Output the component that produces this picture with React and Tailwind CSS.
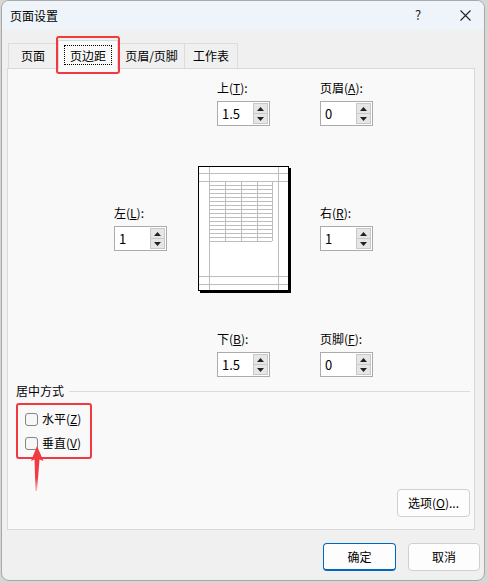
import { useState } from "react";

const font = "font-['Noto_Sans_CJK_SC','Microsoft_YaHei',sans-serif]";

function Spinner({ label, mnemonic, suffix = "):", value }) {
  return (
    <div className="flex flex-col w-[53px]">
      <div className="h-[16px] leading-[16px] text-[12px] text-black whitespace-nowrap mb-[5px]">
        {label}(<span className="underline">{mnemonic}</span>{suffix}
      </div>
      <div className="flex h-[25px] w-[53px] border border-[#ababab] bg-white">
        <div className="flex-1 flex items-center pl-[4px] text-[13px] text-black leading-none">
          {value}
        </div>
        <div className="flex flex-col w-[16px] py-px pr-px gap-0">
          <div className="flex-1 flex items-center justify-center bg-[#e6e6e6] border border-[#c8c8c8]">
            <svg width="7" height="4" viewBox="0 0 7 4">
              <path d="M3.5 0 L7 4 L0 4 Z" fill="#222" />
            </svg>
          </div>
          <div className="flex-1 flex items-center justify-center bg-[#e6e6e6] border border-[#c8c8c8] border-t-0">
            <svg width="7" height="4" viewBox="0 0 7 4">
              <path d="M0 0 L7 0 L3.5 4 Z" fill="#222" />
            </svg>
          </div>
        </div>
      </div>
    </div>
  );
}

function PagePreview() {
  const rows = [];
  for (let i = 0; i <= 15; i++) rows.push(15 + i * 4);
  return (
    <svg width="93" height="127" viewBox="0 0 93 127">
      <rect x="2" y="2" width="91" height="125" fill="#000" />
      <rect x="0.5" y="0.5" width="90" height="124" fill="#fff" stroke="#000" />
      <g stroke="#bdbdbd" strokeWidth="1" shapeRendering="crispEdges">
        <line x1="11.5" y1="1" x2="11.5" y2="124" />
        <line x1="80.5" y1="1" x2="80.5" y2="124" />
        <line x1="1" y1="7.5" x2="90" y2="7.5" />
        <line x1="1" y1="15.5" x2="90" y2="15.5" />
        <line x1="1" y1="110.5" x2="90" y2="110.5" />
        <line x1="1" y1="118.5" x2="90" y2="118.5" />
        {rows.map((y) => (
          <line key={y} x1="11" y1={y + 0.5} x2="74" y2={y + 0.5} />
        ))}
        {[27, 43, 59, 74].map((x) => (
          <line key={x} x1={x + 0.5} y1="15" x2={x + 0.5} y2="75" />
        ))}
      </g>
    </svg>
  );
}

function Checkbox({ label, mnemonic }) {
  const [checked, setChecked] = useState(false);
  return (
    <label className="h-[24px] flex items-center cursor-default">
      <span
        onClick={() => setChecked(!checked)}
        className="w-[13px] h-[13px] rounded-[3px] border border-[#858585] bg-[#f7f7f7] flex items-center justify-center"
      >
        {checked && <span className="text-[9px] leading-none">✓</span>}
      </span>
      <span className="ml-[4px] text-[12px] leading-[16px] text-black whitespace-nowrap">
        {label}(<span className="underline">{mnemonic}</span>)
      </span>
    </label>
  );
}

function Button({ children, primary, className = "" }) {
  return (
    <button
      className={
        "h-[28px] rounded-[4px] bg-[#fdfdfd] text-[12px] text-black " +
        (primary
          ? "border border-[#0067c0] border-b-2 "
          : "border border-[#d0d0d0] ") +
        className
      }
    >
      {children}
    </button>
  );
}

export default function App() {
  const tabs = ["页面", "页边距", "页眉/页脚", "工作表"];
  const widths = ["w-[50px]", "w-[60px]", "w-[67px]", "w-[53px]"];

  return (
    <div className={"w-[488px] h-[583px] bg-[#d6d6d6] pl-px relative " + font}>
      <div className="w-[484px] h-[581px] rounded-[8px] border border-[#a8a8a8] bg-[#f0f0f0] overflow-hidden flex flex-col">
        {/* title bar */}
        <div className="h-[29px] shrink-0 bg-[#eef4f9] flex items-center relative">
          <span className="ml-[8px] text-[12px] text-black leading-none">页面设置</span>
          <span className="absolute left-[413px] top-[6px] text-[13px] leading-[16px] text-[#222]">?</span>
          <svg className="absolute left-[458px] top-[9px]" width="11" height="11" viewBox="0 0 11 11">
            <path d="M0.5 0.5 L10.5 10.5 M10.5 0.5 L0.5 10.5" stroke="#222" strokeWidth="1.1" />
          </svg>
        </div>

        {/* tabs */}
        <div className="mt-[10px] ml-[6px] flex items-end h-[28px] relative z-10">
          {tabs.map((t, i) =>
            i === 1 ? (
              <div
                key={t}
                className={widths[i] + " h-[29px] -mb-px bg-[#f9f9f9] border border-b-0 border-[#d9d9d9] flex items-center justify-center"}
              >
                <span className="px-[5px] h-[20px] leading-[20px] border border-dotted border-black text-[12px] text-black">
                  {t}
                </span>
              </div>
            ) : (
              <div
                key={t}
                className={widths[i] + " h-[25px] border border-b-0 border-[#dcdcdc] bg-[#f0f0f0] flex items-center justify-center text-[12px] text-black " + (i === 0 ? "" : i === 2 ? "" : "border-l-0")}
              >
                {t}
              </div>
            )
          )}
        </div>

        {/* panel */}
        <div className="ml-[5px] w-[468px] h-[462px] shrink-0 bg-[#f9f9f9] border border-[#d9d9d9] flex flex-col">
          <div className="flex pt-[11px] pl-[209px]">
            <Spinner label="上" mnemonic="T" value="1.5" />
            <div className="ml-[50px]">
              <Spinner label="页眉" mnemonic="A" value="0" />
            </div>
          </div>

          <div className="flex items-start mt-[40px] pl-[106px]">
            <div className="mt-[39px]">
              <Spinner label="左" mnemonic="L" value="1" />
            </div>
            <div className="ml-[31px]">
              <PagePreview />
            </div>
            <div className="ml-[29px] mt-[39px]">
              <Spinner label="右" mnemonic="R" value="1" />
            </div>
          </div>

          <div className="flex mt-[38px] pl-[209px]">
            <Spinner label="下" mnemonic="B" value="1.5" />
            <div className="ml-[50px]">
              <Spinner label="页脚" mnemonic="F" value="0" />
            </div>
          </div>

          <div className="flex items-center mt-[6px] pl-[8px] pr-[4px] h-[16px]">
            <span className="text-[12px] leading-[16px] text-black whitespace-nowrap">居中方式</span>
            <div className="flex-1 ml-[5px] h-px bg-[#dcdcdc]" />
          </div>

          <div className="ml-[8px] mt-[4px] w-[76px] h-[56px] border-2 border-[#f03a3f] rounded-[3px] pt-[2px] pl-[7px]">
            <Checkbox label="水平" mnemonic="Z" />
            <Checkbox label="垂直" mnemonic="V" />
          </div>

          <div className="mt-auto mb-[12px] mr-[4px] flex justify-end">
            <Button className="w-[73px]">
              选项(<span className="underline">O</span>)...
            </Button>
          </div>
        </div>

        {/* bottom buttons */}
        <div className="mt-[13px] mr-[4px] flex justify-end gap-[12px]">
          <Button primary className="w-[73px]">确定</Button>
          <Button className="w-[72px]">取消</Button>
        </div>
      </div>

      {/* annotation overlays */}
      <div className="absolute left-[56px] top-[36px] w-[64px] h-[38px] border-2 border-[#f03a3f] rounded-[3px] z-20 pointer-events-none" />
      <svg className="absolute left-0 top-0 z-20 pointer-events-none" width="488" height="583">
        <defs>
          <linearGradient id="arrowFade" x1="0" y1="446" x2="0" y2="492" gradientUnits="userSpaceOnUse">
            <stop offset="0" stopColor="#f23b40" />
            <stop offset="0.7" stopColor="#f23b40" />
            <stop offset="1" stopColor="#f23b40" stopOpacity="0.25" />
          </linearGradient>
        </defs>
        <path d="M37 446 L43.5 461 L39.5 459.5 L37 491 L35.5 491 L34.5 459.5 L31 461 Z" fill="url(#arrowFade)" />
      </svg>
    </div>
  );
}
